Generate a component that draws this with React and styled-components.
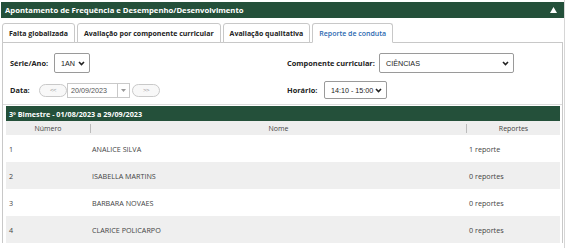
import React from 'react';
import styled, { createGlobalStyle } from 'styled-components';

const tabs = [
  { label: 'Falta globalizada' },
  { label: 'Avaliação por componente curricular' },
  { label: 'Avaliação qualitativa' },
  { label: 'Reporte de conduta', active: true },
];

const students = [
  { num: 1, name: 'ANALICE SILVA', reports: '1 reporte' },
  { num: 2, name: 'ISABELLA MARTINS', reports: '0 reportes' },
  { num: 3, name: 'BARBARA NOVAES', reports: '0 reportes' },
  { num: 4, name: 'CLARICE POLICARPO', reports: '0 reportes' },
];

const GlobalStyle = createGlobalStyle`
  body {
    margin: 0;
    background: #fff;
    font-family: "Open Sans", "DejaVu Sans", sans-serif;
  }
`;

const Chevron = () => (
  <svg width="7" height="5" viewBox="0 0 7 5">
    <path d="M1 1 L3.5 3.5 L6 1" fill="none" stroke="#222" strokeWidth="1.6" />
  </svg>
);

const App = () => {
  return (
    <>
      <GlobalStyle />
      <Page>
        <TitleBar>
          <Title>Apontamento de Frequência e Desempenho/Desenvolvimento</Title>
          <svg width="7" height="6" viewBox="0 0 7 6">
            <path d="M0 6 L3.5 0 L7 6 Z" fill="#fff" />
          </svg>
        </TitleBar>
        <TabRow>
          {tabs.map((tab) => (
            <Tab key={tab.label} active={tab.active}>
              {tab.label}
            </Tab>
          ))}
        </TabRow>
        <Panel>
          <Form>
            <Field>
              <Label width={44}>Série/Ano:</Label>
              <Select width={36} height={20}>
                <span>1AN</span>
                <Chevron />
              </Select>
            </Field>
            <Field>
              <Label width={92}>Componente curricular:</Label>
              <Select width={135} height={20}>
                <span>CIÊNCIAS</span>
                <Chevron />
              </Select>
            </Field>
            <Field>
              <Label width={29}>Data:</Label>
              <PillButton>&lt;&lt;</PillButton>
              <DateInput>
                <span>20/09/2023</span>
                <DateArrow>
                  <svg width="5" height="3" viewBox="0 0 5 3">
                    <path d="M0 0 L5 0 L2.5 3 Z" fill="#999" />
                  </svg>
                </DateArrow>
              </DateInput>
              <PillButton next>&gt;&gt;</PillButton>
            </Field>
            <Field>
              <Label width={37}>Horário:</Label>
              <Select width={63} height={18}>
                <span>14:10 - 15:00</span>
                <Chevron />
              </Select>
            </Field>
          </Form>
          <Section>
            <SectionBar>3º Bimestre - 01/08/2023 a 29/09/2023</SectionBar>
            <Table>
              <HeadRow>
                <HeadCell>Número</HeadCell>
                <HeadCell divided>Nome</HeadCell>
                <HeadCell divided>Reportes</HeadCell>
              </HeadRow>
              {students.map((s, i) => (
                <Row key={s.num} striped={i % 2 === 1}>
                  <NumCell>{s.num}</NumCell>
                  <NameCell>{s.name}</NameCell>
                  <ReportCell>{s.reports}</ReportCell>
                </Row>
              ))}
            </Table>
          </Section>
        </Panel>
      </Page>
    </>
  );
};

const Page = styled.div`
  width: 563px;
  padding: 2px 0 0 1px;
  border-right: 1px solid #d6d6d6;
  height: 246px;
  overflow: hidden;
`;

const TitleBar = styled.div`
  height: 16px;
  background: #24503a;
  display: flex;
  align-items: center;
  justify-content: space-between;
  padding: 0 7px 0 4px;
`;

const Title = styled.div`
  color: #fff;
  font-size: 7.7px;
  font-weight: 700;
`;

const TabRow = styled.div`
  display: flex;
  gap: 2px;
  margin: 5px 0 -1px 1px;
  position: relative;
  z-index: 1;
`;

const Tab = styled.div`
  height: 20px;
  box-sizing: border-box;
  padding: 0 6px;
  display: flex;
  align-items: center;
  border: 1px solid #c8c8c8;
  border-bottom: ${(p) => (p.active ? '1px solid #fff' : '1px solid #c8c8c8')};
  border-radius: 3px 3px 0 0;
  background: #fff;
  font-size: 7px;
  font-weight: ${(p) => (p.active ? 600 : 700)};
  color: ${(p) => (p.active ? '#2a68b0' : '#222')};
`;

const Panel = styled.div`
  margin: 0 0 0 1px;
  width: 561px;
  box-sizing: border-box;
  border: 1px solid #c8c8c8;
  border-bottom: none;
  padding: 0 2px 0 2px;
`;

const Form = styled.div`
  display: grid;
  grid-template-columns: 277px 1fr;
  row-gap: 8px;
  padding: 10px 0 5px 7px;
  margin: 0 -2px;
  border-bottom: 1px solid #dcdcdc;
  align-items: center;
`;

const Field = styled.div`
  display: flex;
  align-items: center;
`;

const Label = styled.div`
  width: ${(p) => p.width}px;
  font-size: 7.4px;
  font-weight: 700;
  color: #222;
`;

const Select = styled.div`
  width: ${(p) => p.width}px;
  height: ${(p) => p.height}px;
  box-sizing: border-box;
  border: 1px solid #9a9a9a;
  border-radius: 2px;
  display: flex;
  align-items: center;
  justify-content: space-between;
  padding: 0 4px 0 6px;
  font-size: 7.2px;
  color: #222;
  font-family: "Liberation Sans", Arial, sans-serif;
`;

const PillButton = styled.div`
  width: 28px;
  height: 13px;
  box-sizing: border-box;
  border: 1px solid #c9c9c9;
  border-radius: 7px;
  background: #f8f8f8;
  display: flex;
  align-items: center;
  justify-content: center;
  font-size: 6px;
  letter-spacing: -0.5px;
  color: #999;
  margin-left: ${(p) => (p.next ? '2px' : '0')};
  font-family: "Liberation Sans", Arial, sans-serif;
`;

const DateInput = styled.div`
  width: 63px;
  height: 15px;
  box-sizing: border-box;
  border: 1px solid #c9c9c9;
  display: flex;
  align-items: center;
  justify-content: space-between;
  padding-left: 3px;
  font-size: 7.2px;
  color: #555;
  font-family: "Liberation Sans", Arial, sans-serif;
`;

const DateArrow = styled.div`
  width: 11px;
  height: 100%;
  border-left: 1px solid #c9c9c9;
  display: flex;
  align-items: center;
  justify-content: center;
`;

const Section = styled.div`
  margin-top: 1px;
  width: 554px;
  margin-left: 1px;
`;

const SectionBar = styled.div`
  height: 15px;
  background: #24503a;
  color: #fff;
  font-size: 7.2px;
  font-weight: 700;
  display: flex;
  align-items: center;
  padding-left: 3px;
`;

const Table = styled.div`
  display: flex;
  flex-direction: column;
`;

const HeadRow = styled.div`
  display: grid;
  grid-template-columns: 84px 376px 1fr;
  height: 14px;
  background: #eeeeee;
  align-items: center;
`;

const HeadCell = styled.div`
  text-align: center;
  font-size: 7px;
  color: #444;
  border-left: ${(p) => (p.divided ? '1px solid #bbb' : 'none')};
  line-height: 9px;
`;

const Row = styled.div`
  display: grid;
  grid-template-columns: 86px 376px 1fr;
  height: 27px;
  align-items: center;
  background: ${(p) => (p.striped ? '#efefef' : '#fff')};
  font-size: 7.2px;
  color: #444;
`;

const NumCell = styled.div`
  padding-left: 3px;
`;

const NameCell = styled.div``;

const ReportCell = styled.div`
  padding-left: 1px;
`;

export default App;
